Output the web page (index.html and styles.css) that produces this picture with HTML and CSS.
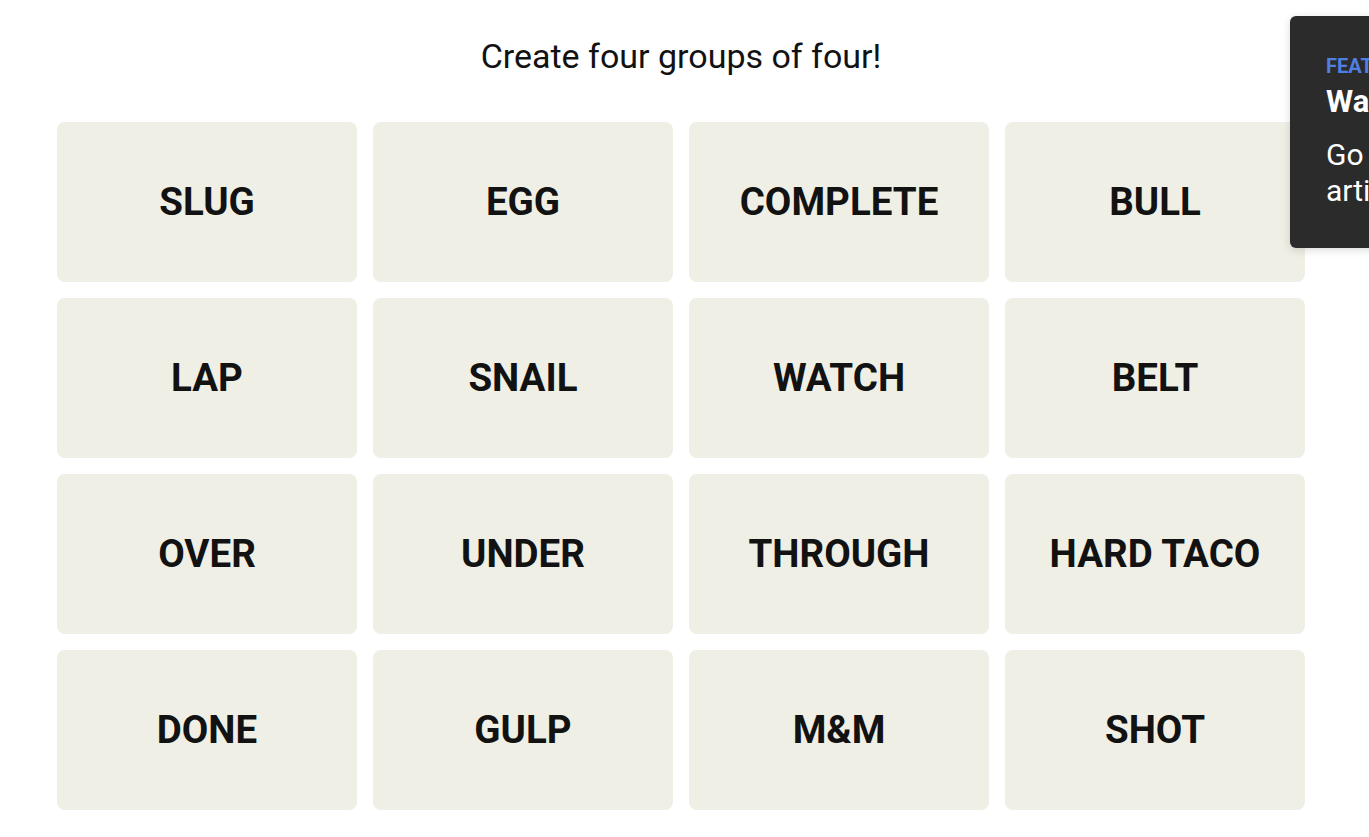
FILE: index.html
```html
<!DOCTYPE html>
<html lang="en">
<head>
<meta charset="utf-8">
<title>Connections</title>
<link rel="stylesheet" href="styles.css">
</head>
<body>
<main class="game">
  <h1 class="prompt">Create four groups of four!</h1>
  <section class="board">
    <button class="tile">SLUG</button>
    <button class="tile">EGG</button>
    <button class="tile">COMPLETE</button>
    <button class="tile">BULL</button>
    <button class="tile">LAP</button>
    <button class="tile">SNAIL</button>
    <button class="tile">WATCH</button>
    <button class="tile">BELT</button>
    <button class="tile">OVER</button>
    <button class="tile">UNDER</button>
    <button class="tile">THROUGH</button>
    <button class="tile">HARD TACO</button>
    <button class="tile">DONE</button>
    <button class="tile">GULP</button>
    <button class="tile">M&amp;M</button>
    <button class="tile">SHOT</button>
  </section>
</main>
<aside class="toast">
  <p class="toast-label">FEATURED</p>
  <p class="toast-title">Want a hint?</p>
  <p class="toast-body">Go to Wordplay for the<br>article on today's puzzle.</p>
</aside>
</body>
</html>
```
FILE: styles.css
```css
html, body {
  margin: 0;
  padding: 0;
  background: #ffffff;
  overflow: hidden;
}
body {
  font-family: Roboto, "Liberation Sans", Arial, sans-serif;
  color: #121212;
  width: 1369px;
  height: 837px;
  position: relative;
}
.game {
  width: 1248px;
  margin-left: 57px;
}
.prompt {
  margin: 0;
  padding-top: 36px;
  font-size: 34px;
  line-height: 40px;
  font-weight: 400;
  text-align: center;
  color: #121212;
}
.board {
  margin-top: 46px;
  display: grid;
  grid-template-columns: repeat(4, 300px);
  grid-auto-rows: 160px;
  gap: 16px;
}
.tile {
  border: none;
  border-radius: 8px;
  background: #efefe6;
  color: #121212;
  font-family: Roboto, "Liberation Sans", Arial, sans-serif;
  font-weight: 700;
  font-size: 38.5px;
  letter-spacing: 0;
  padding: 0 0 2px;
  display: flex;
  align-items: center;
  justify-content: center;
}
.toast {
  position: absolute;
  top: 16px;
  left: 1290px;
  width: 360px;
  height: 232px;
  box-sizing: border-box;
  padding: 38px 36px 0;
  background: #2b2b2b;
  border-radius: 6px;
  box-shadow: 0 2px 8px rgba(0, 0, 0, 0.15);
  color: #ffffff;
}
.toast p {
  margin: 0;
  white-space: nowrap;
}
.toast-label {
  font-size: 20px;
  line-height: 24px;
  font-weight: 700;
  color: #4f7fe0;
}
.toast-title {
  margin-top: 6px !important;
  font-size: 31px;
  line-height: 36px;
  font-weight: 700;
}
.toast-body {
  margin-top: 17px !important;
  font-size: 30px;
  line-height: 36px;
  font-weight: 400;
}
```
